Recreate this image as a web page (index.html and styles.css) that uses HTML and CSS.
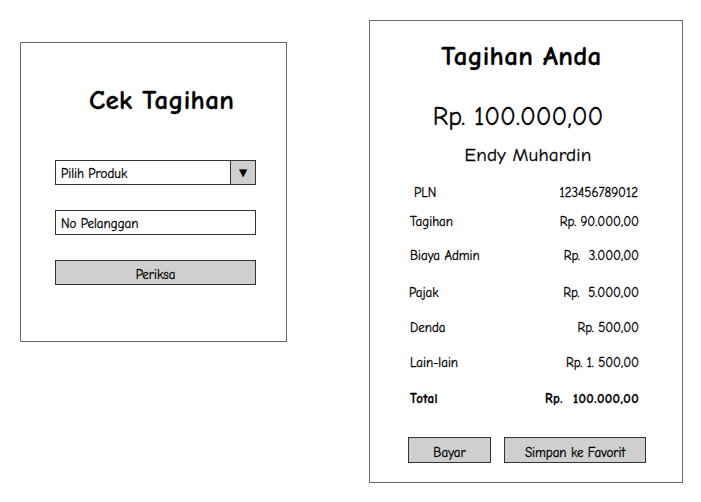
FILE: index.html
```html
<!DOCTYPE html>
<html>
<head>
<meta charset="utf-8">
<link rel="stylesheet" href="styles.css">
</head>
<body>
<div class="page">
  <section class="panel left">
    <h1 class="title cek">Cek Tagihan</h1>
    <div class="select">
      <span class="select-text">Pilih Produk</span>
      <span class="select-arrow">▼</span>
    </div>
    <div class="input">No Pelanggan</div>
    <div class="btn wide">Periksa</div>
  </section>
  <section class="panel right">
    <h1 class="title anda">Tagihan Anda</h1>
    <div class="amount">Rp. 100.000,00</div>
    <div class="name">Endy Muhardin</div>
    <div class="rows">
      <div class="row"><span class="lbl pln">PLN</span><span class="val pln-val">123456789012</span></div>
      <div class="row"><span class="lbl">Tagihan</span><span class="val">Rp. 90.000,00</span></div>
      <div class="row"><span class="lbl">Biaya Admin</span><span class="val">Rp.&nbsp; 3.000,00</span></div>
      <div class="row"><span class="lbl pajak">Pajak</span><span class="val">Rp.&nbsp; 5.000,00</span></div>
      <div class="row"><span class="lbl">Denda</span><span class="val">Rp. 500,00</span></div>
      <div class="row"><span class="lbl">Lain-lain</span><span class="val">Rp. 1. 500,00</span></div>
      <div class="row total"><span class="lbl">Total</span><span class="val">Rp.&nbsp; 100.000,00</span></div>
    </div>
    <div class="actions">
      <div class="btn bayar">Bayar</div>
      <div class="btn fav">Simpan ke Favorit</div>
    </div>
  </section>
</div>
</body>
</html>
```

FILE: styles.css
```css
* { box-sizing: border-box; }
html, body { margin: 0; padding: 0; background: #fff; }
body {
  font-family: "Comic Sans MS", "Comic Neue", "Open Sans", "DejaVu Sans", sans-serif;
  color: #000;
  width: 701px;
  height: 502px;
  overflow: hidden;
  -webkit-text-stroke: 0.3px #000;
}
.page {
  display: flex;
  align-items: flex-start;
  padding-left: 20px;
}
.panel {
  border: 1.5px solid #6a6a6a;
  background: #fff;
  flex-shrink: 0;
}
.left {
  margin-top: 42px;
  width: 267px;
  height: 300px;
  padding: 0 31px 0 34px;
}
.right {
  margin-top: 20px;
  margin-left: 82px;
  width: 314px;
  height: 463px;
  padding: 20px 42px 0 40px;
}
.title {
  margin: 0;
  font-size: 27px;
  font-weight: bold;
  line-height: 32px;
  text-align: center;
  letter-spacing: 0.3px;
}
.cek {
  margin-top: 42px;
  padding-left: 13px;
}
.anda {
  padding-right: 7px;
}
.select, .input, .btn {
  height: 25px;
  border: 1.5px solid #333;
  font-size: 13px;
  line-height: 22px;
  padding-top: 2px;
}
.select {
  margin-top: 43px;
  display: flex;
  width: 201px;
  padding-top: 0;
}
.select-text {
  flex: 1;
  padding-left: 5px;
  padding-top: 2px;
}
.select-arrow {
  width: 25px;
  border-left: 1.5px solid #333;
  background: #cfcfcf;
  text-align: center;
  font-size: 10px;
  padding-top: 1px;
}
.input {
  margin-top: 25px;
  width: 201px;
  padding-left: 5px;
}
.btn {
  background: #cfcfcf;
  text-align: center;
}
.wide {
  margin-top: 25px;
  width: 201px;
  padding-top: 3px;
}
.amount {
  margin-top: 29px;
  font-size: 26px;
  line-height: 30px;
  text-align: center;
  padding-right: 14px;
}
.name {
  margin-top: 12px;
  font-size: 19px;
  line-height: 22px;
  text-align: center;
  padding-left: 6px;
  letter-spacing: 0.2px;
}
.rows {
  margin-top: 19px;
  display: grid;
  grid-template-rows: 29px 34px 37px 35px 35px 36px 16px;
}
.row {
  display: flex;
  justify-content: space-between;
  font-size: 13px;
  line-height: 16px;
  margin-right: 1px;
}
.pln { padding-left: 4px; }
.pajak { margin-left: -1px; }
.pln-val { margin-right: 1px; }
.total { font-weight: bold; letter-spacing: 0.4px; }
.actions {
  margin-top: 30px;
  display: flex;
  gap: 13px;
  margin-left: -2px;
}
.bayar { width: 83px; height: 26px; flex-shrink: 0; padding-top: 4px; }
.fav { width: 142px; height: 26px; flex-shrink: 0; padding-top: 4px; }
```
